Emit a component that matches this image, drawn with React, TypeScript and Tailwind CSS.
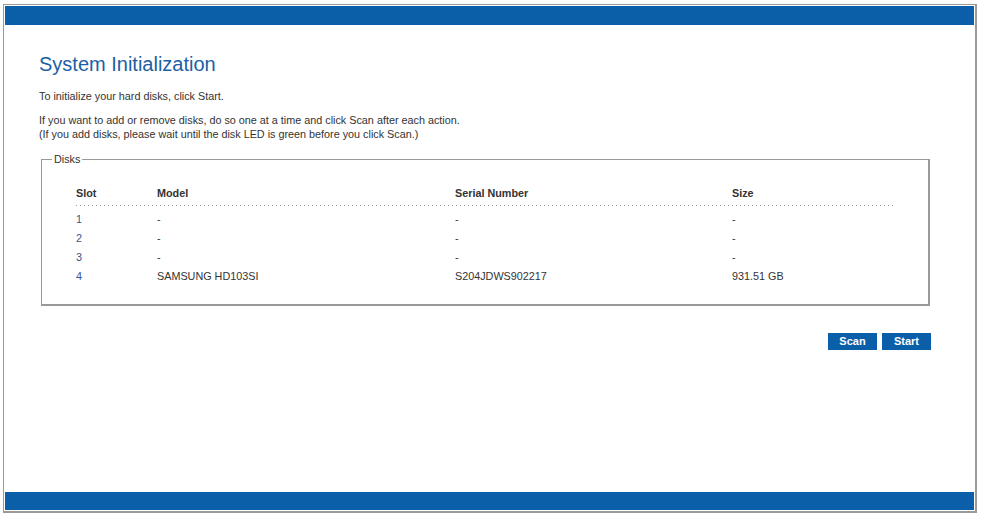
const disks = [
  { slot: '1', model: '-', serial: '-', size: '-' },
  { slot: '2', model: '-', serial: '-', size: '-' },
  { slot: '3', model: '-', serial: '-', size: '-' },
  { slot: '4', model: 'SAMSUNG HD103SI', serial: 'S204JDWS902217', size: '931.51 GB' },
]

const cols = 'grid grid-cols-[81px_298px_277px_1fr]'

export default function App() {
  return (
    <div
      className="h-[517px] w-[981px] bg-white pl-[3px] pt-[4px] text-[10.8px] text-[#333333]"
      style={{ fontFamily: '"Liberation Sans", Arial, sans-serif' }}
    >
      <div className="flex h-[509px] w-[974px] flex-col border border-[#9a9a9a] border-r-2 border-b-2 p-px">
        <div className="h-[19px] shrink-0 bg-[#0a5fa8]" />

        <div className="flex-1 pl-[34px] pr-[43px]">
          <h1 className="mt-[27px] text-[20px] leading-[24px] text-[#1b5fa6]">System Initialization</h1>
          <p className="mt-[13px] leading-[14px]">To initialize your hard disks, click Start.</p>
          <p className="mt-[10px] leading-[14px]">
            If you want to add or remove disks, do so one at a time and click Scan after each action.
            <br />
            (If you add disks, please wait until the disk LED is green before you click Scan.)
          </p>

          <fieldset className="ml-[2px] mt-[12px] w-[889px] border-l border-t border-r-2 border-b-2 border-[#999999]">
            <legend className="ml-[10px] px-[2px] leading-[13px]">Disks</legend>
            <div className="px-[34px] pb-[18px] pt-[18px]">
              <div className={`${cols} h-[18px] items-center font-bold`}>
                <span>Slot</span>
                <span>Model</span>
                <span>Serial Number</span>
                <span>Size</span>
              </div>
              <div className="mb-[3px] mt-[3px] h-px w-[818px] bg-[linear-gradient(to_right,#9a9a9a_1px,transparent_1px)] bg-[length:4px_1px]" />
              {disks.map((d) => (
                <div className={`${cols} h-[19.3px] items-center`} key={d.slot}>
                  <span className="text-[#34568a]">{d.slot}</span>
                  <span>{d.model}</span>
                  <span>{d.serial}</span>
                  <span>{d.size}</span>
                </div>
              ))}
            </div>
          </fieldset>

          <div className="mt-[27px] flex justify-end gap-[5px]">
            <button
              className="h-[17px] w-[49px] bg-[#0a5fa8] text-[11px] font-bold leading-[17px] text-white"
              type="button"
            >
              Scan
            </button>
            <button
              className="h-[17px] w-[49px] bg-[#0a5fa8] text-[11px] font-bold leading-[17px] text-white"
              type="button"
            >
              Start
            </button>
          </div>
        </div>

        <div className="h-[18px] shrink-0 bg-[#0a5fa8]" />
      </div>
    </div>
  )
}
